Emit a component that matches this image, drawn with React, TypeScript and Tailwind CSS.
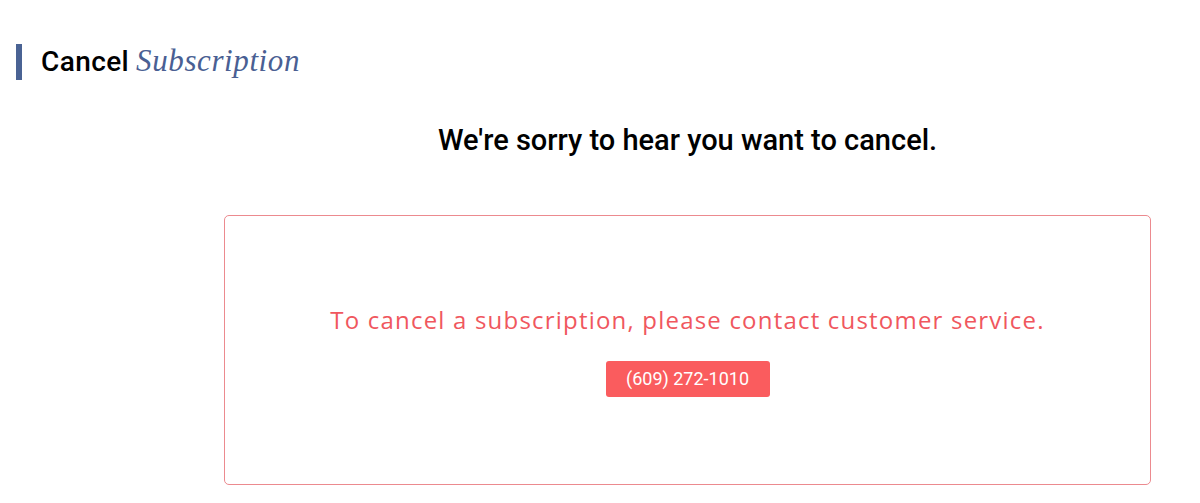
export default function App() {
  return (
    <div className="min-h-[503px] w-[1200px] bg-white pt-[43px] font-['Roboto',sans-serif]">
      <div className="flex items-center pl-[16px]">
        <div className="h-[36px] w-[6px] bg-[#4a6394]"></div>
        <h1 className="ml-[19px] flex items-baseline text-[28px] leading-[36px] text-black">
          <span className="font-medium tracking-[0.4px]">Cancel</span>
          <span className="ml-[7px] font-['Liberation_Serif',serif] text-[31px] italic tracking-[0.6px] text-[#4a5f93]">Subscription</span>
        </h1>
      </div>

      <div className="ml-[224px] w-[927px]">
        <h2 className="mt-[42px] text-center text-[29px] font-medium leading-[36px] text-black">
          We're sorry to hear you want to cancel.
        </h2>

        <div className="mt-[57px] flex h-[270px] flex-col items-center justify-center rounded-[5px] border border-[#ec8a8f]">
          <p className="font-['Open_Sans',sans-serif] text-[24px] leading-[32px] tracking-[1.2px] text-[#f0575e]">
            To cancel a subscription, please contact customer service.
          </p>
          <button className="mt-[25px] h-[36px] w-[164px] rounded-[3px] bg-[#fa5c5e] text-[18px] text-white">
            (609) 272-1010
          </button>
        </div>
      </div>
    </div>
  );
}
